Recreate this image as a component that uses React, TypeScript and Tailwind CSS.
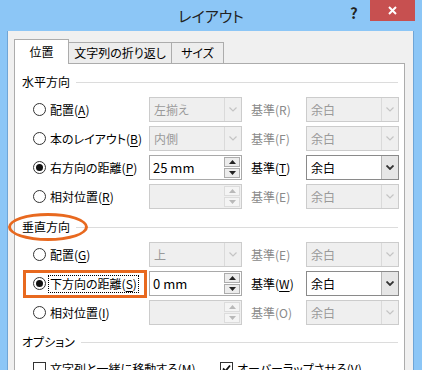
import { ReactNode } from 'react'

const font =
  "[font-family:'Noto_Sans_CJK_JP','Noto_Sans',sans-serif] [font-feature-settings:'palt']"

const Chevron = ({ disabled }: { disabled?: boolean }) => (
  <svg width="8" height="5" viewBox="0 0 8 5">
    <path
      d="M0.5 0.5 L4 4 L7.5 0.5"
      fill="none"
      stroke={disabled ? '#c4c4c4' : '#333'}
      strokeWidth={disabled ? 1.2 : 1.8}
    />
  </svg>
)

const Radio = ({ checked }: { checked?: boolean }) => (
  <span className="flex size-[13px] shrink-0 items-center justify-center rounded-full border border-[#333] bg-white">
    {checked && <span className="size-[7px] rounded-full bg-[#111]" />}
  </span>
)

const Check = ({ checked }: { checked?: boolean }) => (
  <span className="flex size-[13px] shrink-0 items-center justify-center border border-[#333] bg-white">
    {checked && (
      <svg width="9" height="9" viewBox="0 0 9 9">
        <path d="M1 4.5 L3.5 7 L8 1.5" fill="none" stroke="#111" strokeWidth="1.8" />
      </svg>
    )}
  </span>
)

const Label = ({
  text,
  k,
  disabled,
  underline = true,
}: {
  text: string
  k: string
  disabled?: boolean
  underline?: boolean
}) => (
  <span className={disabled ? 'text-[#8a8a8a]' : 'text-black'}>
    {text}(<span className={underline && !disabled ? 'underline underline-offset-2' : ''}>{k}</span>)
  </span>
)

const Select = ({ value, disabled }: { value: string; disabled?: boolean }) =>
  disabled ? (
    <div className="flex h-[25px] w-[93px] items-stretch border border-[#cccccc] bg-[#efefef] text-[#9a9a9a]">
      <span className="flex flex-1 items-center pl-[4px]">{value}</span>
      <span className="flex w-[17px] items-center justify-center border-l border-[#dadada]">
        <Chevron disabled />
      </span>
    </div>
  ) : (
    <div className="flex h-[25px] w-[93px] items-stretch border border-[#8a8a8a] bg-white text-black">
      <span className="flex flex-1 items-center pl-[4px]">{value}</span>
      <span className="flex w-[17px] items-center justify-center border-l border-[#b5b5b5] bg-[#e6e6e6]">
        <Chevron />
      </span>
    </div>
  )

const SpinArrow = ({ up, disabled }: { up?: boolean; disabled?: boolean }) => (
  <span
    className={
      'flex flex-1 items-center justify-center border ' +
      (disabled ? 'border-[#dcdcdc] bg-[#f4f4f4]' : 'border-[#acacac] bg-[#ececec]')
    }
  >
    <svg width="7" height="4" viewBox="0 0 7 4">
      <path
        d={up ? 'M0 4 L3.5 0 L7 4 Z' : 'M0 0 L3.5 4 L7 0 Z'}
        fill={disabled ? '#b9b9b9' : '#222'}
      />
    </svg>
  </span>
)

const Spin = ({ value, disabled }: { value?: string; disabled?: boolean }) => (
  <div
    className={
      'flex h-[25px] w-[93px] items-stretch border ' +
      (disabled ? 'border-[#cccccc] bg-[#efefef]' : 'border-[#a9a9a9] bg-white')
    }
  >
    <span className="flex flex-1 items-center pl-[3px] text-[13px] text-black">{value}</span>
    <span className="my-[1px] mr-[1px] flex w-[16px] flex-col gap-[1px]">
      <SpinArrow up disabled={disabled} />
      <SpinArrow disabled={disabled} />
    </span>
  </div>
)

type RowProps = {
  checked?: boolean
  label: ReactNode
  control: ReactNode
  base: ReactNode
  right: ReactNode
}

const Row = ({ checked, label, control, base, right }: RowProps) => (
  <div className="flex h-[25px] items-center pl-[18px]">
    <div className="flex w-[116px] items-center gap-[4px]">
      <Radio checked={checked} />
      {label}
    </div>
    {control}
    <div className="ml-[9px] w-[55px]">{base}</div>
    {right}
  </div>
)

const Header = ({ title, className }: { title: string; className?: string }) => (
  <div className={'flex h-[16px] items-center gap-[6px] pl-[7px] pr-[6px] ' + (className ?? '')}>
    <span className="text-black">{title}</span>
    <span className="h-px flex-1 bg-[#dcdcdc]" />
  </div>
)

export default function App() {
  return (
    <div
      className={
        'relative flex h-[370px] w-[422px] flex-col overflow-hidden bg-[#8cc6f6] text-[12px] leading-none ' +
        font
      }
    >
      <div className="relative flex h-[31px] shrink-0 items-center justify-center">
        <span className="text-[15px] text-[#222]">レイアウト</span>
        <span className="absolute left-[350px] top-[5px] text-[15px] font-bold text-[#222]">?</span>
        <span className="absolute left-[370px] top-0 flex h-[21px] w-[45px] items-center justify-center bg-[#c75050]">
          <svg width="9" height="9" viewBox="0 0 9 9">
            <path d="M1 1 L8 8 M8 1 L1 8" stroke="white" strokeWidth="2" />
          </svg>
        </span>
      </div>

      <div className="ml-[7px] mr-[8px] flex flex-1 flex-col border-x border-[#6fa5d6] bg-[#f0f0f0] pl-[6px] pr-[8px] pt-[8px]">
        <div className="flex items-end">
          <div className="relative z-10 -mb-px flex h-[25px] w-[55px] items-center justify-center border-x border-t border-[#acacac] bg-white">
            位置
          </div>
          <div className="flex h-[21px] w-[103px] items-center justify-center border-r border-t border-[#acacac] bg-[#ededed]">
            文字列の折り返し
          </div>
          <div className="flex h-[21px] w-[52px] items-center justify-center border-r border-t border-[#acacac] bg-[#ededed]">
            サイズ
          </div>
        </div>

        <div className="flex flex-1 flex-col border border-[#acacac] bg-white pt-[10px]">
          <Header title="水平方向" />
          <div className="mt-[7px] flex flex-col gap-[4px]">
            <Row
              label={<Label text="配置" k="A" />}
              control={<Select value="左揃え" disabled />}
              base={<Label text="基準" k="R" disabled />}
              right={<Select value="余白" disabled />}
            />
            <Row
              label={<Label text="本のレイアウト" k="B" />}
              control={<Select value="内側" disabled />}
              base={<Label text="基準" k="F" disabled />}
              right={<Select value="余白" disabled />}
            />
            <Row
              checked
              label={<Label text="右方向の距離" k="P" />}
              control={<Spin value="25 mm" />}
              base={<Label text="基準" k="T" />}
              right={<Select value="余白" />}
            />
            <Row
              label={<Label text="相対位置" k="R" />}
              control={<Spin disabled />}
              base={<Label text="基準" k="E" disabled />}
              right={<Select value="余白" disabled />}
            />
          </div>

          <Header title="垂直方向" className="mt-[10px]" />
          <div className="mt-[7px] flex flex-col gap-[4px]">
            <Row
              label={<Label text="配置" k="G" />}
              control={<Select value="上" disabled />}
              base={<Label text="基準" k="E" disabled />}
              right={<Select value="余白" disabled />}
            />
            <Row
              checked
              label={
                <span className="-ml-[2px] border border-dotted border-black px-[1px] py-[2px]">
                  <Label text="下方向の距離" k="S" />
                </span>
              }
              control={<Spin value="0 mm" />}
              base={<Label text="基準" k="W" />}
              right={<Select value="余白" />}
            />
            <Row
              label={<Label text="相対位置" k="I" />}
              control={<Spin disabled />}
              base={<Label text="基準" k="O" disabled />}
              right={<Select value="余白" disabled />}
            />
          </div>

          <Header title="オプション" className="mt-[9px]" />
          <div className="mt-[6px] flex h-[25px] items-center pl-[18px]">
            <div className="flex w-[187px] items-center gap-[4px]">
              <Check />
              <Label text="文字列と一緒に移動する" k="M" />
            </div>
            <div className="flex items-center gap-[4px]">
              <Check checked />
              <Label text="オーバーラップさせる" k="V" />
            </div>
          </div>
        </div>
      </div>

      {/* annotations */}
      <div className="pointer-events-none absolute left-[8px] top-[213px] h-[28px] w-[80px] rounded-[50%] border-[3px] border-[#e8691f]" />
      <div className="pointer-events-none absolute left-[23px] top-[270px] h-[28px] w-[124px] border-[3px] border-[#e8691f]" />
    </div>
  )
}
